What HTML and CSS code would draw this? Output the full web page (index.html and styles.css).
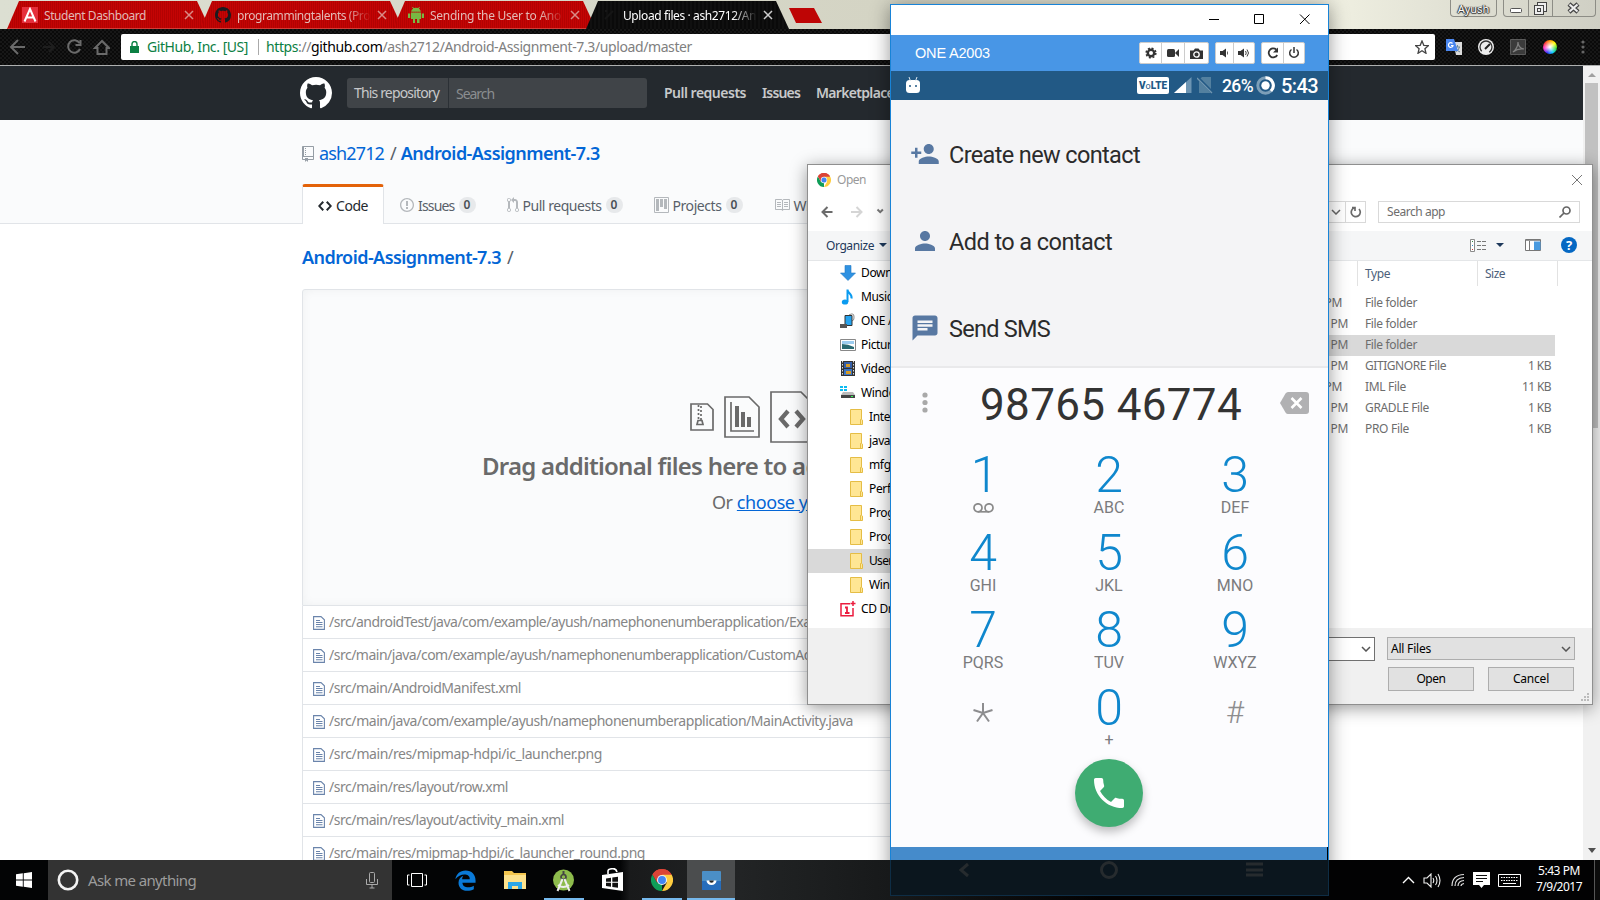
FILE: index.html
```html
<!DOCTYPE html>
<html lang="en">
<head>
<meta charset="utf-8">
<title>Upload files · ash2712/Android-Assignment-7.3</title>
<link rel="stylesheet" href="styles.css">
</head>
<body>
<svg class="defs" width="0" height="0">
  <defs>
    <symbol id="mark" viewBox="0 0 16 16"><path fill-rule="evenodd" d="M8 0C3.58 0 0 3.58 0 8c0 3.54 2.29 6.53 5.47 7.59.4.07.55-.17.55-.38 0-.19-.01-.82-.01-1.49-2.01.37-2.53-.49-2.69-.94-.09-.23-.48-.94-.82-1.13-.28-.15-.68-.52-.01-.53.63-.01 1.08.58 1.23.82.72 1.21 1.87.87 2.33.66.07-.52.28-.87.51-1.07-1.78-.2-3.64-.89-3.64-3.95 0-.87.31-1.59.82-2.15-.08-.2-.36-1.02.08-2.12 0 0 .67-.21 2.2.82.64-.18 1.32-.27 2-.27.68 0 1.36.09 2 .27 1.53-1.04 2.2-.82 2.2-.82.44 1.1.16 1.92.08 2.12.51.56.82 1.27.82 2.15 0 3.07-1.87 3.75-3.65 3.95.29.25.54.73.54 1.48 0 1.07-.01 1.93-.01 2.2 0 .21.15.46.55.38A8.01 8.01 0 0 0 16 8c0-4.42-3.58-8-8-8z"/></symbol>
    <symbol id="chrome" viewBox="0 0 48 48"><path fill="#db4437" d="M24 24 3.2 12A24 24 0 0 1 44.8 12z"/><path fill="#0f9d58" d="M24 24v24A24 24 0 0 1 3.2 12l10.4 18z"/><path fill="#ffcd40" d="M24 12h20.8A24 24 0 0 1 24 48l10.4-18z"/><path fill="#db4437" d="M3.2 12A24 24 0 0 1 44.8 12H24L13.6 30z"/><circle cx="24" cy="24" r="11" fill="#f1f1f1"/><circle cx="24" cy="24" r="8.6" fill="#4285f4"/></symbol>
    <symbol id="x" viewBox="0 0 10 10"><path d="M1 1l8 8M9 1L1 9" fill="none" stroke="currentColor" stroke-width="1.5"/></symbol>
    <symbol id="file" viewBox="0 0 12 14"><path d="M.6.6h7.4l3.4 3.2v9.6H.6zM3 4.5h4M3 6.5h6.5M3 8.5h6.5M3 10.7h6.5" fill="none" stroke="#6a84ab" stroke-width="1.1"/></symbol>
    <symbol id="folder" viewBox="0 0 13 16"><path d="M.5.5h11v10l1 .6v4.4H.5z" fill="#ffe694" stroke="#e5bd45"/><path d="M10.5 15v-4.500l1-1" fill="none" stroke="#e5bd45"/></symbol>
    <symbol id="chev" viewBox="0 0 10 6"><path d="M1 1l4 4 4-4" fill="none" stroke="currentColor" stroke-width="1.5"/></symbol>
  </defs>
</svg>

<main class="browser">
  <div class="strip">
    <div class="tab t-red"><svg width="16" height="16"><rect width="16" height="16" fill="#e5303c"/><path d="M2.500 14.500 8 2l5.500 12.500M4.500 10.500h7" fill="none" stroke="#fff" stroke-width="2"/></svg><span class="tt"><i data-w="102">Student Dashboard</i></span><svg class="tx" width="10" height="10"><use href="#x"/></svg></div>
    <div class="tab t-red"><svg width="16" height="16" fill="#1b1b1f"><use href="#mark"/></svg><span class="tt fade"><i data-w="133">programmingtalents (Pro</i></span><svg class="tx" width="10" height="10"><use href="#x"/></svg></div>
    <div class="tab t-red"><svg width="16" height="16" viewBox="0 0 16 16" fill="#78b843"><path d="M3 5.500h10V12H3zM4.500 12h2.500v4H5v-4zM9 12h2.500v4H9zM0 6.500h2.200V11H0zM13.800 6.500H16V11h-2.200zM3.200 4.800a4.800 4 0 0 1 9.600 0z"/><path d="M4.500 0l1.300 2M11.500 0l-1.300 2" stroke="#78b843"/></svg><span class="tt fade"><i data-w="131">Sending the User to Ano</i></span><svg class="tx" width="10" height="10"><use href="#x"/></svg></div>
    <div class="tab t-dark"><svg width="16" height="16"><path d="M4 12l8-8M4 4h2" stroke="#161616" stroke-width="2"/></svg><span class="tt fade"><i data-w="133">Upload files · ash2712/An</i></span><svg class="tx" width="10" height="10"><use href="#x"/></svg></div>
    <div class="newtab"></div>
    <div class="user">Ayush</div>
    <div class="wbtns">
      <svg width="24" height="17"><rect x="6.500" y="8.500" width="11" height="4" rx="1" fill="#fff" stroke="#555"/></svg>
      <svg width="24" height="17"><rect x="8.500" y="2.500" width="9" height="9" fill="#eee" stroke="#444"/><rect x="5.500" y="5.500" width="9" height="9" fill="#eee" stroke="#444"/><rect x="8.500" y="8.500" width="3" height="3" fill="none" stroke="#444"/></svg>
      <svg width="41" height="17"><path d="M16 4l9 8M25 4l-9 8" stroke="#444" stroke-width="4.500"/><path d="M16.500 4.500l8 7M24.500 4.500l-8 7" stroke="#eee" stroke-width="2.200"/></svg>
    </div>
  </div>
  <div class="toolbar">
    <svg width="110" height="36" fill="none" stroke="#6a6a6a" stroke-width="2"><path d="M25 18H12M18 11l-7 7 7 7"/><path d="M43 18h11M49 13l5 5-5 5" stroke="#1e1e1e"/><path d="M79.500 14A6.200 6.200 0 1 0 80 20M80.500 11v5h-5"/><path d="M95 19l7-7 7 7h-2.500v6h-9v-6z"/></svg>
    <div class="omni">
      <svg width="9" height="12"><path d="M0 5h9v7H0z" fill="#0b8043"/><path d="M2 5V3a2.500 2.500 0 0 1 5 0v2" fill="none" stroke="#0b8043" stroke-width="1.400"/></svg>
      <span class="ev" data-w="101">GitHub, Inc. [US]</span><span class="bar"></span>
      <span class="url" data-w="426"><b>https</b>://<em>github.com</em>/ash2712/Android-Assignment-7.3/upload/master</span>
      <svg class="star" width="14" height="14" viewBox="0 0 14 14"><path d="M7 1l1.800 4.300 4.600.4-3.500 3 1.100 4.600L7 10.800l-4 2.500 1.100-4.600-3.500-3 4.600-.4z" fill="none" stroke="#444" stroke-width="1.300"/></svg>
    </div>
    <div class="exts">
      <svg width="16" height="16"><path d="M7 3h9v13H10z" fill="#dcdcdc"/><path d="M9 8h5M11.500 6v2M13.500 8q-1 4-4 5M10 9q1 3 4 4" stroke="#6d8a99" fill="none"/><path d="M0 0h8l4 12H0z" fill="#4a86ee"/><path d="M6.500 4.500a2.300 2.300 0 1 0 .5 2H5" fill="none" stroke="#fff" stroke-width="1.200"/></svg>
      <svg width="16" height="16"><circle cx="8" cy="8" r="8" fill="#eee"/><circle cx="8" cy="8" r="6" fill="none" stroke="#333" stroke-width="1.300" stroke-dasharray="29 9" transform="rotate(135 8 8)"/><path d="M7 10l5-5" stroke="#222" stroke-width="2"/></svg>
      <svg width="16" height="16"><path d="M.5.5h15v15H.5z" fill="#3b3b3b" stroke="#5a5a5a"/><path d="M3 13Q8 9 8 3q0 6 6 7Q8 9 3 13" fill="none" stroke="#808080" stroke-width="1.200"/></svg>
      <span class="wheel"></span>
      <svg class="dots" width="4" height="14" fill="#666"><circle cx="2" cy="2" r="1.600"/><circle cx="2" cy="7" r="1.600"/><circle cx="2" cy="12" r="1.600"/></svg>
    </div>
  </div>

  <div class="view">
    <div class="page">
      <header class="gh">
        <svg width="32" height="32" fill="#fff"><use href="#mark"/></svg>
        <div class="search"><span class="scope"><i data-w="85">This repository</i></span><span class="ph"><i data-w="38">Search</i></span></div>
        <nav><a data-w="82">Pull requests</a><a data-w="38">Issues</a><a data-w="78">Marketplace</a></nav>
      </header>
      <section class="head">
        <h1><svg width="12" height="16" viewBox="0 0 12 16" fill="#959da5"><path fill-rule="evenodd" d="M4 9H3V8h1v1zm0-3H3v1h1V6zm0-2H3v1h1V4zm0-2H3v1h1V2zm8-1v12c0 .55-.45 1-1 1H6v2l-1.500-1.500L3 16v-2H1c-.55 0-1-.45-1-1V1c0-.55.45-1 1-1h10c.55 0 1 .45 1 1zm-1 10H1v2h2v-1h3v1h5v-2zm0-10H2v9h9V1z"/></svg><a data-w="65">ash2712</a><span>/</span><a class="b" data-w="199">Android-Assignment-7.3</a></h1>
        <nav class="rnav">
          <a class="on"><svg width="14" height="16" viewBox="0 0 14 16" fill="#24292e"><path d="M9.500 3L8 4.500 11.500 8 8 11.500 9.500 13 14 8 9.500 3zm-5 0L0 8l4.500 5L6 11.500 2.500 8 6 4.500 4.500 3z"/></svg><span data-w="32">Code</span></a>
          <a class="n1"><svg width="14" height="16" viewBox="0 0 14 16" fill="#b4b8bc"><path fill-rule="evenodd" d="M7 2.300c3.140 0 5.700 2.560 5.700 5.700s-2.560 5.700-5.700 5.700A5.710 5.710 0 0 1 1.300 8c0-3.140 2.560-5.700 5.700-5.700zM7 1C3.140 1 0 4.140 0 8s3.140 7 7 7 7-3.140 7-7-3.140-7-7-7zm1 3H6v5h2V4zm0 6H6v2h2v-2z"/></svg><span data-w="36.500">Issues</span><b>0</b></a>
          <a class="n2"><svg width="12" height="16" viewBox="0 0 12 16" fill="#b4b8bc"><path fill-rule="evenodd" d="M11 11.280V5c-.03-.78-.34-1.470-.94-2.060C9.460 2.350 8.780 2.030 8 2H7V0L4 3l3 3V4h1c.27.020.48.110.69.310.21.200.3.420.31.690v6.280A1.993 1.993 0 0 0 10 15a1.993 1.993 0 0 0 1-3.720zm-1 2.920c-.66 0-1.200-.55-1.200-1.200 0-.65.55-1.200 1.200-1.200.65 0 1.200.55 1.200 1.200 0 .65-.55 1.200-1.200 1.200zM4 3c0-1.110-.89-2-2-2a1.993 1.993 0 0 0-1 3.720v6.560A1.993 1.993 0 0 0 2 15a1.993 1.993 0 0 0 1-3.720V4.720c.59-.34 1-.98 1-1.720zm-.8 10c0 .66-.55 1.200-1.200 1.200-.65 0-1.200-.55-1.200-1.200 0-.65.55-1.200 1.200-1.200.65 0 1.200.55 1.200 1.200zM2 4.200C1.340 4.200.8 3.650.8 3c0-.65.55-1.200 1.200-1.200.65 0 1.200.55 1.200 1.200 0 .65-.55 1.200-1.200 1.200z"/></svg><span data-w="79">Pull requests</span><b>0</b></a>
          <a class="n3"><svg width="15" height="16" viewBox="0 0 15 16" fill="#b4b8bc"><path fill-rule="evenodd" d="M10 12h3V2h-3v10zm-4-2h3V2H6v8zm-4 4h3V2H2v12zm-1 1h13V1H1v14zM14 0H1a1 1 0 0 0-1 1v14a1 1 0 0 0 1 1h13a1 1 0 0 0 1-1V1a1 1 0 0 0-1-1z"/></svg><span data-w="49">Projects</span><b>0</b></a>
          <a class="n4"><svg width="16" height="16" viewBox="0 0 16 16" fill="#b4b8bc"><path fill-rule="evenodd" d="M3 5h4v1H3V5zm0 3h4V7H3v1zm0 2h4V9H3v1zm11-5h-4v1h4V5zm0 2h-4v1h4V7zm0 2h-4v1h4V9zm2-6v9c0 .55-.45 1-1 1H9.500l-1 1-1-1H2c-.55 0-1-.45-1-1V3c0-.55.45-1 1-1h5.500l1 1 1-1H15c.55 0 1 .45 1 1zm-8 .5L7.500 3H2v9h6V3.500zm7-.5H9.500l-.5.5V12h6V3z"/></svg><span data-w="26">Wiki</span></a>
        </nav>
      </section>
      <section class="body">
        <div class="crumb"><a data-w="199">Android-Assignment-7.3</a><span>/</span></div>
        <div class="drop">
          <div class="pics">
            <svg width="24" height="28" fill="none" stroke="#6a6a6a" stroke-width="1.700"><path d="M1 1h16.500L23 6.500V27H1z"/><path d="M8.500 2v14M11 3v14" stroke-dasharray="2 2"/><path d="M7 21.500h6l-1-4H8z"/></svg>
            <svg width="36" height="42" fill="none" stroke="#6a6a6a" stroke-width="1.700"><path d="M1 1h24l10 10v30H1z"/><path d="M7 6v29h23"/><path d="M13 10v21M19 16v15M25 21v10" stroke-width="4"/></svg>
            <svg width="44" height="52" fill="none" stroke="#6a6a6a" stroke-width="1.700"><path d="M1 1h30l12 12v38H1z"/><path d="M18 20l-7 8 7 8M26 20l7 8-7 8" stroke-width="4.200"/></svg>
            <svg width="36" height="42" fill="none" stroke="#6a6a6a" stroke-width="1.700"><path d="M1 1h24l10 10v30H1z"/></svg>
            <svg width="24" height="28" fill="none" stroke="#6a6a6a" stroke-width="1.700"><path d="M1 1h16.500L23 6.500V27H1z"/></svg>
          </div>
          <h2><span data-w="620">Drag additional files here to add them to your repository</span></h2>
          <p><span data-w="160">Or <u>choose your files</u></span></p>
        </div>
        <ul class="files">
          <li><svg width="12" height="14"><use href="#file"/></svg><span data-w="562">/src/androidTest/java/com/example/ayush/namephonenumberapplication/ExampleInstrum</span></li>
          <li><svg width="12" height="14"><use href="#file"/></svg><span data-w="541">/src/main/java/com/example/ayush/namephonenumberapplication/CustomAdapter.java</span></li>
          <li><svg width="12" height="14"><use href="#file"/></svg><span data-w="192">/src/main/AndroidManifest.xml</span></li>
          <li><svg width="12" height="14"><use href="#file"/></svg><span data-w="524">/src/main/java/com/example/ayush/namephonenumberapplication/MainActivity.java</span></li>
          <li><svg width="12" height="14"><use href="#file"/></svg><span data-w="273">/src/main/res/mipmap-hdpi/ic_launcher.png</span></li>
          <li><svg width="12" height="14"><use href="#file"/></svg><span data-w="179">/src/main/res/layout/row.xml</span></li>
          <li><svg width="12" height="14"><use href="#file"/></svg><span data-w="235">/src/main/res/layout/activity_main.xml</span></li>
          <li><svg width="12" height="14"><use href="#file"/></svg><span data-w="316">/src/main/res/mipmap-hdpi/ic_launcher_round.png</span></li>
        </ul>
      </section>
    </div>
    <div class="sbar"><span class="up"></span><span class="thumb"></span><span class="down"></span></div>
  </div>
</main>

<section class="dialog">
  <div class="dtitle"><svg width="14" height="14"><use href="#chrome"/></svg><span data-w="29">Open</span><svg class="dx" width="12" height="12"><path d="M1 1l10 10M11 1L1 11" stroke="#777"/></svg></div>
  <div class="dnav">
    <svg width="70" height="16" fill="none" stroke-width="2"><path d="M13.500 8H3M8.500 3l-5 5 5 5" stroke="#6b6b6b"/><path d="M32 8h10M37.500 3l5 5-5 5" stroke="#d5d5d5"/><path d="M58.500 5.500l2.700 2.700 2.700-2.700" stroke="#777"/></svg>
    <div class="addr"><svg width="10" height="6"><use href="#chev"/></svg><i><svg width="12" height="12"><path d="M4 2a4.500 4.500 0 1 0 5 1M2 1.500h3V5" fill="none" stroke="#6a6a6a" stroke-width="1.700"/></svg></i></div>
    <div class="dsearch"><span data-w="58">Search app</span><svg width="12" height="12" fill="none" stroke="#666" stroke-width="1.700"><circle cx="7.500" cy="4.500" r="3.500"/><path d="M5 7l-4.500 4.500"/></svg></div>
  </div>
  <div class="dtools"><span data-w="48">Organize</span><i class="car"></i>
    <svg class="v1" width="16" height="13"><path d="M.5.5h4v12h-4z" fill="#fff" stroke="#8b8b8b"/><path d="M7 2.500h4M12 2.500h4M7 6.500h4M12 6.500h4M7 10.500h4M12 10.500h4" stroke="#777"/><path d="M2 6h1v1H2z" fill="#38c"/><path d="M2 10h1v1H2z" fill="#c33"/><path d="M2 2h1v1H2z" fill="#384"/></svg><i class="car c2"></i>
    <svg class="v2" width="16" height="12"><path d="M.5.5h15v11H.5zM4.500 2v10" fill="#fff" stroke="#777"/><path d="M1 1.500h14" stroke="#999"/><path d="M9 2.500h6.500V11H9z" fill="#4a9be0"/></svg>
    <span class="help">?</span>
  </div>
  <div class="dbody">
    <ul class="tree">
      <li><svg width="16" height="16"><path d="M5 .5h6V8h4.500L8 15.500.5 8H5z" fill="#2f92e2" stroke="#2479c4" stroke-width=".6"/></svg>Downloads</li>
      <li><svg width="16" height="16"><ellipse cx="5" cy="13" rx="3.200" ry="2.600" fill="#0a9bf0"/><path d="M7.500 13V.5c0 4 5 4 4 9" fill="none" stroke="#0a9bf0" stroke-width="2"/></svg>Music</li>
      <li><svg width="16" height="16"><path d="M9 2q5-3 5 2t-3 3" fill="none" stroke="#888"/><path d="M5 2.500h7v10H5z" fill="#26a3ee" stroke="#333"/><path d="M0 11h7v4H0z" fill="#555"/></svg>ONE A2003</li>
      <li><svg width="16" height="16"><path d="M.5 2.500h15v11H.5z" fill="#fff" stroke="#888"/><path d="M2 4h12v3H2z" fill="#9ccdf0"/><path d="M2 7q6 0 12 3v2H2z" fill="#286a72"/></svg>Pictures</li>
      <li><svg width="16" height="16"><path d="M1 0h14v15H1z" fill="#333"/><path d="M4 1h8v6H4z" fill="#355fa8"/><path d="M4 8h8v6H4z" fill="#3a74c4"/><path d="M6 3h4v3H6zM6 10h5v3H6z" fill="#d69b25"/><path d="M2.500 0v15M13.500 0v15" stroke="#ddd" stroke-dasharray="1.500 1.500"/></svg>Videos</li>
      <li><svg width="16" height="16"><path d="M0 1h3v2H0zM4 1h3v2H4zM0 4h3v2H0zM4 4h3v2H4z" fill="#0cbcf2"/><path d="M3 7h10l2 3H1z" fill="#bbb"/><path d="M1 10h14v3H1z" fill="#444"/><path d="M11 11h2v1h-2z" fill="#3f5"/></svg>Windows (C:)</li>
      <li class="f"><svg width="13" height="16"><use href="#folder"/></svg>Intel</li>
      <li class="f"><svg width="13" height="16"><use href="#folder"/></svg>java</li>
      <li class="f"><svg width="13" height="16"><use href="#folder"/></svg>mfg</li>
      <li class="f"><svg width="13" height="16"><use href="#folder"/></svg>PerfLogs</li>
      <li class="f"><svg width="13" height="16"><use href="#folder"/></svg>Program Files</li>
      <li class="f"><svg width="13" height="16"><use href="#folder"/></svg>Program Files</li>
      <li class="f sel tight"><svg width="13" height="16"><use href="#folder"/></svg>Users</li>
      <li class="f"><svg width="13" height="16"><use href="#folder"/></svg>Windows</li>
      <li><svg width="16" height="16" fill="none" stroke="#eb1d3f" stroke-width="1.500"><path d="M10 2.800H1v12h12V7M13 0v5M10.500 2.500h5"/><path d="M5 6.500h2V12M5 12h4.500" stroke-width="1.800"/></svg>CD Drive</li>
    </ul>
    <div class="grid">
      <div class="gr gh-row"><span></span><span><i data-w="25">Type</i></span><span><i data-w="20">Size</i></span></div>
      <div class="gr"><span class="d d2">PM</span><span><i data-w="52">File folder</i></span><span></span></div>
      <div class="gr"><span class="d">PM</span><span><i data-w="52">File folder</i></span><span></span></div>
      <div class="gr sel"><span class="d">PM</span><span><i data-w="52">File folder</i></span><span></span></div>
      <div class="gr"><span class="d">PM</span><span><i data-w="81">GITIGNORE File</i></span><span class="sz"><i data-w="23">1 KB</i></span></div>
      <div class="gr"><span class="d d2">PM</span><span><i data-w="41">IML File</i></span><span class="sz"><i data-w="29">11 KB</i></span></div>
      <div class="gr"><span class="d">PM</span><span><i data-w="64">GRADLE File</i></span><span class="sz"><i data-w="23">1 KB</i></span></div>
      <div class="gr"><span class="d">PM</span><span><i data-w="44">PRO File</i></span><span class="sz"><i data-w="23">1 KB</i></span></div>
    </div>
  </div>
  <div class="dfoot">
    <div class="frow"><div class="fname"><svg width="10" height="6"><use href="#chev"/></svg></div><div class="ftype"><span data-w="40">All Files</span><svg width="10" height="6"><use href="#chev"/></svg></div></div>
    <div class="frow f2"><button><span data-w="29">Open</span></button><button><span data-w="36">Cancel</span></button></div>
    <svg class="grip" width="9" height="9" fill="#bbb"><path d="M6 0h2v2H6zM3 3h2v2H3zM6 3h2v2H6zM0 6h2v2H0zM3 6h2v2H3zM6 6h2v2H6z"/></svg>
  </div>
</section>

<section class="phone">
  <div class="ptitle"><svg width="104" height="12" fill="none" stroke="#000"><path d="M0 6.500h10M45.500 1.500h9v9h-9z"/><path d="M91 1.500l9.500 9.500M100.500 1.500L91 11"/></svg></div>
  <div class="pbar"><span data-w="75">ONE A2003</span>
    <div class="bg">
      <i class="w22"><svg width="12" height="12"><circle cx="6" cy="6" r="3.200" fill="none" stroke="#333" stroke-width="2.400"/><circle cx="6" cy="6" r="4.800" fill="none" stroke="#333" stroke-width="1.600" stroke-dasharray="2 1.770"/></svg></i>
      <i class="w23"><svg width="12" height="10" fill="#333"><rect y="1" width="8" height="8" rx="1.500"/><path d="M8 5l4-4v8z"/></svg></i>
      <i class="w24"><svg width="13" height="11"><path d="M0 2.500h3.500L5 .5h3.500l1.500 2h3V11H0z" fill="#333"/><circle cx="6.500" cy="6.500" r="2.700" fill="none" stroke="#fff" stroke-width="1.300"/></svg></i>
    </div>
    <div class="bg">
      <i class="w18"><svg width="9" height="10"><path d="M0 3h2.500L6 .5v9L2.500 7H0z" fill="#333"/><path d="M7.500 3.500v3" stroke="#666"/></svg></i>
      <i class="w22"><svg width="12" height="10"><path d="M0 3h2.500L6 .5v9L2.500 7H0z" fill="#333"/><path d="M7.500 3q1.500 2 0 4M9 1.500q3 3.500 0 7" fill="none" stroke="#444"/></svg></i>
    </div>
    <div class="bg">
      <i class="w21"><svg width="12" height="12"><path d="M9.200 2.500A4.500 4.500 0 1 0 10.200 8" fill="none" stroke="#333" stroke-width="1.800"/><path d="M11 .5v5H6z" fill="#333"/></svg></i>
      <i class="w21"><svg width="12" height="12" fill="none" stroke="#333" stroke-width="1.500"><path d="M3.500 2.500a4.300 4.300 0 1 0 5 0M6 0v6"/></svg></i>
    </div>
  </div>
  <div class="pstat">
    <svg width="14" height="17"><rect y="3" width="14" height="13" rx="3.500" fill="#fff"/><path d="M3 0l1.500 4M11 0L9.500 4" stroke="#dfe8ef"/><circle cx="4" cy="9" r="1" fill="#225985"/><circle cx="10" cy="9" r="1" fill="#225985"/></svg>
    <span class="volte">V<small>o</small>LTE</span>
    <svg class="sg" width="18" height="17"><path d="M17.500 0v16H0z" fill="#6c94b2"/><path d="M12 5v11H0z" fill="#fff"/></svg>
    <svg class="sm" width="17" height="17"><path d="M5 0h9v16H2V3z" fill="#53809f"/><path d="M0 0l16 16" stroke="#225985" stroke-width="3"/><path d="M0 1l15 15" stroke="#7095b0" stroke-width="1.300"/></svg>
    <span class="pct" data-w="31">26%</span>
    <svg class="bt" width="19" height="19" fill="none"><circle cx="9.500" cy="9.500" r="7.700" stroke="#7d9fb8" stroke-width="3"/><path d="M9.500 1.800A7.700 7.700 0 0 1 15 15" stroke="#fff" stroke-width="3"/><circle cx="9.500" cy="9.500" r="4.200" fill="#fff"/></svg>
    <span class="clk" data-w="37">5:43</span>
  </div>
  <div class="acts">
    <div><svg width="30" height="30" viewBox="0 0 24 24" fill="#5878a2"><path d="M15 12c2.210 0 4-1.790 4-4s-1.790-4-4-4-4 1.790-4 4 1.790 4 4 4zm-9-2V7H4v3H1v2h3v3h2v-3h3v-2H6zm9 4c-2.670 0-8 1.340-8 4v2h16v-2c0-2.660-5.330-4-8-4z"/></svg><span data-w="191">Create new contact</span></div>
    <div><svg width="30" height="30" viewBox="0 0 24 24" fill="#5878a2"><path d="M12 12c2.210 0 4-1.790 4-4s-1.790-4-4-4-4 1.790-4 4 1.790 4 4 4zm0 2c-2.670 0-8 1.340-8 4v2h16v-2c0-2.660-5.330-4-8-4z"/></svg><span data-w="163">Add to a contact</span></div>
    <div><svg width="30" height="30" viewBox="0 0 24 24" fill="#5878a2"><path d="M20 2H4c-1.100 0-1.990.9-1.990 2L2 22l4-4h14c1.100 0 2-.9 2-2V4c0-1.100-.9-2-2-2zM6 9h12v2H6V9zm8 5H6v-2h8v2zm4-6H6V6h12v2z"/></svg><span data-w="101">Send SMS</span></div>
  </div>
  <div class="num"><svg width="6" height="22" fill="#a9a9a9"><circle cx="3" cy="3" r="2.600"/><circle cx="3" cy="10.500" r="2.600"/><circle cx="3" cy="18" r="2.600"/></svg><span data-w="262">98765 46774</span><svg width="29" height="22"><path d="M8 0h18q3 0 3 3v16q0 3-3 3H8q-1.500 0-2.500-1.500L0 11l5.500-9.500Q6.500 0 8 0z" fill="#b1b1b3"/><path d="M11.500 6l10 10M21.500 6l-10 10" stroke="#fff" stroke-width="2.600"/></svg></div>
  <div class="keys">
    <div><b class="one">1</b><svg width="21" height="10" fill="none" stroke="#8a8a8a" stroke-width="1.700"><circle cx="5" cy="4.800" r="4"/><circle cx="16" cy="4.800" r="4"/><path d="M5 8.800h11"/></svg></div><div><b>2</b><i>ABC</i></div><div><b>3</b><i>DEF</i></div>
    <div><b>4</b><i>GHI</i></div><div><b>5</b><i>JKL</i></div><div><b>6</b><i>MNO</i></div>
    <div><b>7</b><i>PQRS</i></div><div><b>8</b><i>TUV</i></div><div><b>9</b><i>WXYZ</i></div>
    <div><svg class="ast" width="22" height="22" fill="none" stroke="#8d8d8f" stroke-width="2"><path d="M11 11V1M11 11l9.500-3M11 11l6 8.500M11 11l-6 8.500M11 11L1.500 8"/></svg></div><div><b>0</b><i class="plus">+</i></div><div><em>#</em></div>
  </div>
  <div class="call"><span><svg width="40" height="40" viewBox="0 0 24 24" fill="#fff"><path d="M6.620 10.790c1.440 2.830 3.760 5.140 6.590 6.590l2.200-2.200c.27-.27.67-.36 1.020-.24 1.120.37 2.330.57 3.570.57.55 0 1 .45 1 1V20c0 .55-.45 1-1 1-9.390 0-17-7.610-17-17 0-.55.45-1 1-1h3.500c.55 0 1 .45 1 1 0 1.250.2 2.450.57 3.570.11.350.03.740-.25 1.020l-2.200 2.200z"/></svg></span></div>
  <div class="pnav"></div>
</section>

<footer class="task">
  <div class="start"><svg width="16" height="16" fill="#fff"><path d="M0 2.300l6.800-1v6.300H0zM7.700 1.200L16 0v7.600H7.700zM0 8.400h6.800v6.300L0 13.700zM7.700 8.400H16V16l-8.300-1.200z"/></svg></div>
  <div class="ask"><svg width="22" height="22"><circle cx="11" cy="11" r="9.200" fill="none" stroke="#f2f2f2" stroke-width="2.600"/></svg><span data-w="108">Ask me anything</span><svg class="mic" width="12" height="17" fill="none" stroke="#aaa"><rect x="3.500" y=".5" width="5" height="10" rx="1"/><path d="M.5 7v5.500h11V7M6 12.500v3.500M3.500 16h5"/></svg></div>
  <div class="apps">
    <div><svg width="20" height="16" fill="none" stroke="#fff"><path d="M4.500 1.500h11v13h-11zM2.500 3H.5v10h2M17.500 3h2v10h-2"/></svg></div>
    <div class="edge"><svg width="21" height="21" viewBox="0 0 24 24" fill="#0a7ad8"><path d="M.5 10.700C1 5 5.500.5 12.200.5 19 .5 23.500 5 23.500 12v2.500H8.500c.2 6 8 6.500 13 3.500v4c-7.500 4-17.500 1.500-17.500-7.500 0-4 2.500-6.800 5.500-8-1 1.500-1.200 2.500-1.300 4h8.600c.5-7-11.500-7-16.300.2z"/></svg></div>
    <div><svg width="22" height="20"><path d="M0 1h8l2 2h12v16H0z" fill="#f4c64e"/><path d="M0 5h22v14H0z" fill="#fde28c"/><path d="M4 12h14v7h-4v-3H8v3H4z" fill="#2ba7e8"/></svg></div>
    <div class="ul"><svg width="21" height="23"><circle cx="10.500" cy="11" r="10.500" fill="#8dbb4c"/><path d="M10.500 2v4" stroke="#444" stroke-width="2"/><circle cx="10.500" cy="8" r="2.500" fill="none" stroke="#444" stroke-width="1.700"/><path d="M9.500 10L4.500 22M11.500 10l5 12M5 16q5 4 11 0" fill="none" stroke="#eee" stroke-width="2"/></svg></div>
    <div><svg width="22" height="24"><path d="M0 7l21-3v19l-21-3z" fill="#fff"/><path d="M6 6V3q0-2 4-2.300Q14 0 15 4" fill="none" stroke="#fff" stroke-width="1.600"/><path d="M4 10.500l5-.7v4H4zM10.300 9.600l5.700-.8v5h-5.700zM4 14.800h5v4l-5-.7zM10.300 14.800H16v5l-5.700-.8z" fill="#111"/></svg></div>
    <div class="ul"><svg width="22" height="22"><use href="#chrome"/></svg></div>
    <div class="ul full"><svg width="19" height="19"><rect width="19" height="19" rx="1" fill="#4b8fc6"/><rect y="10" width="19" height="9" fill="#276dbb"/><path d="M4.500 9.500h10a5 4.500 0 0 1-10 0z" fill="#fff"/><path d="M7.200 9.500h4.600a2.300 2.300 0 0 1-4.600 0z" fill="#222"/></svg></div>
  </div>
  <div class="under">
    <svg width="438" height="36" fill="none" stroke="#262b2e" stroke-width="3"><path d="M77 4l-7 6 7 6"/><circle cx="218" cy="10" r="7.500"/><path d="M355 4h17M355 10h17M355 15h17"/></svg>
  </div>
  <div class="tray">
    <svg class="up2" width="13" height="8"><path d="M1 7l5.500-5.500L12 7" fill="none" stroke="#fff" stroke-width="1.400"/></svg>
    <svg width="18" height="15" fill="none" stroke="#eee" stroke-width="1.100"><path d="M1 5h3l4-4v13L4 10H1zM10 5q1.500 2.500 0 5M12.500 3q3 4.500 0 9M15 1q4 6.500 0 13"/></svg>
    <svg class="wf" width="14" height="14" fill="none" stroke="#ddd" stroke-width="1.200"><path d="M1 13Q1 2 13 1.500M4 13q0-8 9-8.500M7 13q0-5 6-5.500M10 13q0-2 3-2.500"/></svg>
    <svg class="ac" width="17" height="16"><path d="M0 0h17v13h-6l-2.500 3L6 13H0z" fill="#fff"/><path d="M3 3.500h11M3 6.500h11M3 9.500h7" stroke="#111"/></svg>
    <svg class="kb" width="23" height="13"><path d="M.5.500h22v12H.5z" fill="none" stroke="#fff"/><path d="M3 3.500h17M3 6.500h17" stroke="#fff" stroke-dasharray="1.500 1"/><path d="M5 9.500h13" stroke="#fff"/></svg>
    <div class="time"><span data-w="42">5:43 PM</span><span data-w="46">7/9/2017</span></div>
  </div>
</footer>
<script src="fit.js"></script>
</body>
</html>
```
FILE: styles.css
```css
* { box-sizing: border-box; margin: 0; padding: 0; }
body { width: 1600px; height: 900px; overflow: hidden; position: relative; background: #fff; font-family: "Noto Sans", "Open Sans", sans-serif; font-size: 12px; }
svg { flex: none; display: block; }
i, em { font-style: normal; }
ul { list-style: none; }
span, i, a { white-space: nowrap; }
[data-w] { display: inline-block; }
.defs { position: absolute; }

/* Browser window */
.browser { position: absolute; left: 0; top: 0; width: 1600px; height: 860px; display: flex; flex-direction: column; }
.strip { height: 29px; flex: none; display: flex; align-items: flex-start; padding: 1px 4px 0 7px; background: linear-gradient(90deg, #dcdfd2, #d4d4c4 55%, #eeeee0 84%, #cfcfc4); }
.tab { width: 203px; height: 28px; margin-right: -10px; flex: none; display: flex; align-items: center; padding: 0 0 0 15px; color: #e3b9b5; clip-path: polygon(12px 0, 190px 0, 203px 100%, 0 100%); }
.t-red { background: repeating-linear-gradient(90deg, #c40404 0 1px, #b30202 1px 2px); box-shadow: inset 0 -1px #d53b36; }
.t-dark { background: repeating-linear-gradient(90deg, #101010 0 2px, #0a0a0a 2px 4px); color: #fff; }
.tt { width: 134px; margin-left: 6px; overflow: hidden; flex: none; }
.tt.fade { mask-image: linear-gradient(90deg, #000 82%, transparent); }
.tx { margin-left: 6px; color: #d98b86; }
.t-dark .tx { color: #ccc; }
.newtab { width: 33px; height: 15px; margin: 7px 0 0 10px; background: #be0505; clip-path: polygon(0 0, 25px 0, 100% 100%, 7px 100%); }
.user { margin: -1px 6px 0 auto; width: 47px; height: 17px; border: 1px solid #8d8d86; border-top: 0; border-radius: 0 0 4px 4px; text-align: center; line-height: 17px; font-size: 11px; color: #fff; text-shadow: 0 0 1px #222, 1px 0 1px #333, -1px 0 1px #333, 0 1px 1px #333; }
.wbtns { display: flex; margin-top: -1px; height: 17px; width: 93px; border: 1px solid #8d8d86; border-top: 0; border-radius: 0 0 4px 4px; }
.wbtns svg + svg { border-left: 1px solid #8d8d86; }
.wbtns svg { flex: 0 1 auto; }
.toolbar { height: 37px; flex: none; display: flex; align-items: flex-start; background: repeating-conic-gradient(#0a0a0a 0 25%, #171717 0 50%) 0 0 / 4px 4px; border-bottom: 1px solid #aeb0b0; }
.omni { width: 1314px; height: 26px; margin: 5px 0 0 11px; background: #fff; border-radius: 2px; display: flex; align-items: center; padding: 0 6px 0 9px; font-size: 14px; }
.omni span { margin-top: -1px; }
.ev { color: #0b8043; margin-left: 8px; }
.omni .bar { width: 1px; height: 16px; background: #aaa; margin: 0 7px 0 10px; }
.url { color: #808080; }
.url b { font-weight: 400; color: #0b8043; }
.url em { color: #000; }
.star { margin-left: auto; }
.exts { display: flex; align-items: center; height: 36px; padding-left: 11px; gap: 16px; }
.wheel { width: 14px; height: 14px; border-radius: 50%; background: radial-gradient(#fff 5%, transparent 65%), conic-gradient(#f90, #ff0, #3d3, #0cf, #33f, #f3c, #f33, #f90); margin-left: 1px; }
.dots { margin-left: 8px; }
.view { flex: 1; display: flex; min-height: 0; }
.page { width: 1583px; overflow: hidden; }
.gh { height: 54px; background: #24292e; display: flex; align-items: center; padding-left: 300px; font-size: 14px; }
.search { width: 300px; height: 30px; margin-left: 15px; background: #404448; border-radius: 3px; display: flex; align-items: center; }
.scope { width: 102px; height: 30px; line-height: 29px; padding-left: 7px; border-right: 1px solid #2b3035; color: #c8c9cb; }
.ph { padding-left: 7px; color: #8b8e90; }
.gh nav { display: flex; gap: 16px; margin: -1px 0 0 17px; font-weight: 600; color: #c8c9cb; }
.head { height: 104px; background: #fafbfc; border-bottom: 1px solid #e1e4e8; padding: 19px 0 0 302px; color: #586069; }
h1 { font-size: 18px; font-weight: 400; display: flex; align-items: center; height: 28px; }
h1 svg { margin-top: 1px; }
h1 a { color: #0366d6; margin-left: 5px; }
h1 span { margin: 0 4px 0 6px; }
h1 a.b { font-weight: 600; margin-left: 0; }
.rnav { display: flex; margin-top: 17px; height: 40px; font-size: 14px; }
.rnav a { display: flex; align-items: center; padding-top: 2px; }
.rnav a svg { margin-right: 4px; }
.rnav b { width: 17px; height: 16px; border-radius: 8px; background: #e7e9eb; text-align: center; font-size: 12px; line-height: 16px; font-weight: 600; margin-left: 4px; color: #4a5057; }
.rnav .on { width: 82px; border: 1px solid #e1e4e8; border-top: 3px solid #e36209; border-bottom: 0; border-radius: 3px 3px 0 0; background: #fff; padding: 0 0 0 15px; color: #24292e; }
.n1 { margin-left: 16px; }
.n2 { margin-left: 31px; }
.n3 { margin-left: 31px; }
.n4 { margin-left: 31px; }
.body { padding: 19px 0 0 302px; }
.crumb { font-size: 18px; line-height: 28px; height: 46px; color: #586069; }
.crumb a { font-weight: 600; color: #0366d6; margin-right: 6px; }
.drop { width: 980px; height: 317px; border: 1px solid #e1e4e8; border-radius: 3px 3px 0 0; background: #fafbfc; box-shadow: inset 0 0 10px rgba(27,31,35,.05); text-align: center; color: #6a6a6a; padding-top: 101px; }
.pics { display: flex; justify-content: center; align-items: center; gap: 10px; }
h2 { font-size: 24px; font-weight: 600; line-height: 30px; margin-top: 8px; }
.drop p { font-size: 18px; line-height: 26px; margin-top: 8px; }
.drop u { color: #0366d6; }
.files { width: 980px; border-left: 1px solid #e1e4e8; font-size: 14px; color: #868686; }
.files li { height: 33px; display: flex; align-items: center; padding-left: 10px; gap: 4px; border-bottom: 1px solid #e1e4e8; }
.files span { margin-top: -1px; }
.files svg { margin-top: 1px; }
.sbar { width: 17px; background: #f1f1f1; display: flex; flex-direction: column; align-items: center; }
.up { border: 4px solid transparent; border-top: 0; border-bottom-color: #a0a0a0; margin: 7px 0 6px; }
.thumb { width: 13px; height: 345px; background: #c1c1c1; }
.down { border: 4px solid transparent; border-bottom: 0; border-top: 5px solid #505050; margin: auto 0 7px; }

/* File chooser */
.dialog { position: absolute; left: 807px; top: 164px; width: 786px; height: 541px; background: #fff; border: 1px solid #8f8f8f; box-shadow: 0 3px 16px rgba(0,0,0,.4); color: #000; display: flex; flex-direction: column; }
.dtitle { height: 30px; display: flex; align-items: center; padding: 0 9px 1px; color: #999; gap: 6px; flex: none; }
.dx { margin-left: auto; }
.dnav { height: 36px; display: flex; align-items: center; padding: 0 12px 2px 11px; flex: none; }
.addr { margin-left: auto; width: 400px; height: 22px; border: 1px solid #d9d9d9; display: flex; justify-content: flex-end; align-items: center; color: #666; margin-right: 12px; gap: 4px; }
.addr i { width: 20px; height: 20px; border-left: 1px solid #d9d9d9; display: grid; place-items: center; }
.dsearch { width: 202px; height: 22px; border: 1px solid #d9d9d9; display: flex; align-items: center; justify-content: space-between; padding: 0 8px; color: #6d6d6d; }
.dsearch span { margin-top: -1px; }
.dtools { height: 30px; background: #f5f6f7; border-bottom: 1px solid #e4e6e8; display: flex; align-items: center; padding: 0 15px 1px 18px; color: #1e395b; flex: none; }
.car { border: 4px solid transparent; border-top-color: #1e395b; border-bottom: 0; margin-left: 5px; }
.v1 { margin-left: auto; }
.c2 { margin: 0 21px 0 10px; }
.help { width: 16px; height: 16px; border-radius: 50%; background: #0568c3; color: #fff; text-align: center; line-height: 16px; font-size: 13px; font-weight: 700; margin-left: 20px; }
.dbody { height: 367px; display: flex; overflow: hidden; flex: none; }
.tree { width: 300px; letter-spacing: -.35px; }
.tree li { height: 24px; display: flex; align-items: center; padding: 0 0 2px 32px; gap: 5px; }
.tree .f { padding-left: 42px; gap: 6px; }
.tree .tight { letter-spacing: -.65px; }
.tree svg { margin-top: 1px; }
.sel { background: #d9d9d9; }
.grid { width: 454px; margin-left: auto; margin-right: 37px; color: #6d6d6d; }
.gr { height: 21px; display: grid; grid-template-columns: 257px 120px 77px; align-items: center; }
.gr > span { padding: 0 0 2px 7px; }
.gr.gh-row { height: 25px; margin-bottom: 7px; grid-template-columns: 257px 120px 80px; color: #4c607a; width: 457px; }
.gh-row span { border-right: 1px solid #e2e2e2; height: 25px; line-height: 25px; }
.gr .d { text-align: right; padding-right: 10px; letter-spacing: -.3px; }
.gr .d2 { padding-right: 16px; }
.gr .sz { text-align: right; padding-right: 4px; }
.dfoot { flex: 1; background: #f0f0f0; padding: 9px 17px 0; position: relative; }
.frow { display: flex; justify-content: flex-end; gap: 12px; }
.frow svg { color: #555; }
.fname { width: 420px; height: 24px; border: 1px solid #707070; background: #fff; display: flex; align-items: center; justify-content: flex-end; padding-right: 3px; }
.ftype { width: 188px; height: 23px; border: 1px solid #adadad; background: #e1e1e1; display: flex; align-items: center; justify-content: space-between; padding: 0 3px; }
.f2 { margin-top: 6px; gap: 14px; padding-right: 1px; }
.frow button { width: 86px; height: 24px; border: 1px solid #adadad; background: #e1e1e1; font: inherit; padding-bottom: 2px; }
.grip { position: absolute; right: 2px; bottom: 2px; }

/* Mirrored phone */
.phone { position: absolute; left: 890px; top: 4px; width: 439px; height: 892px; border: 1px solid #1883d7; background: #fcfcfe; box-shadow: 0 2px 18px rgba(0,0,0,.42); font-family: Roboto, sans-serif; display: flex; flex-direction: column; }
.phone > div { flex: none; }
.ptitle { height: 30px; background: #fff; display: flex; justify-content: flex-end; padding: 8px 15px 0 0; }
.pbar { height: 36px; background: #4896e6; display: flex; align-items: center; padding-left: 24px; gap: 6px; color: #fff; font: 14.500px "Liberation Sans", sans-serif; }
.pbar > span { margin-right: 143px; }
.bg { display: flex; height: 22px; background: #fff; border: 1px solid #ccc; border-radius: 2px; }
.bg i { display: grid; place-items: center; }
.bg i + i { border-left: 1px solid #ccc; }
.w18 { width: 17px; } .w21 { width: 21px; } .w22 { width: 21px; } .w23 { width: 23px; } .w24 { width: 24px; }
.pstat { height: 29px; background: #225985; display: flex; align-items: center; padding-left: 15px; color: #fff; }
.volte { margin-left: 217px; width: 32px; height: 17px; background: #fff; border-radius: 2px; color: #225985; font-size: 10px; font-weight: 900; line-height: 17px; text-align: center; }
.volte small { font-size: 9px; font-weight: 400; }
.sg { margin-left: 5px; } .sm { margin-left: 5px; }
.pct { margin-left: 8px; font-size: 17.500px; font-weight: 500; }
.bt { margin-left: 3px; }
.clk { margin-left: 6px; font-size: 20px; font-weight: 500; }
.acts { height: 268px; background: #f4f4f6; border-bottom: 2px solid #e9e9eb; padding-top: 10px; }
.acts div { height: 87px; display: flex; align-items: center; padding: 1px 0 0 19px; gap: 9px; font-size: 23.500px; color: #2b2b2b; }
.acts span { margin-top: 1px; }
.num { height: 74px; display: flex; align-items: center; padding: 0 19px 4px 31px; justify-content: space-between; }
.num span { font-size: 44px; color: #333; margin: 4px 0 0 14px; }
.keys { display: grid; grid-template-columns: 126px 126px 126px; grid-auto-rows: 77.700px; padding-left: 29px; height: 311px; }
.keys div { display: flex; flex-direction: column; align-items: center; }
.keys b { font-size: 50px; font-weight: 300; color: #0f87cd; line-height: 50px; height: 50px; margin-top: 8px; }
.keys .one { padding-left: 3px; }
.keys i { font-size: 16px; line-height: 18px; color: #7b7b7d; margin-top: -1px; }
.keys .plus { margin-top: -2px; }
.keys b + svg { margin-top: 3px; }
.keys .ast { margin-top: 27px; }
.keys em { font-size: 31px; font-weight: 300; line-height: 36px; margin-top: 20px; color: #8d8d8f; }
.call { height: 94px; display: grid; place-items: start center; padding: 5px 1px 0 0; }
.call span { width: 68px; height: 68px; margin-top: 1px; border-radius: 50%; background: #3fac72; display: grid; place-items: center; box-shadow: 0 5px 10px rgba(0,0,0,.25); }
.pnav { flex: 1 !important; background: #458bcb; border-right: 1px solid #000; }

/* Taskbar */
.task { position: absolute; left: 0; top: 860px; width: 1600px; height: 40px; background: linear-gradient(90deg, #030405 620px, #191a1b 630px, #222425 740px, #17191a 890px, #020203 1100px); display: flex; }
.start { width: 48px; display: grid; place-items: center; }
.ask { width: 344px; background: #333; display: flex; align-items: center; padding: 0 14px 0 9px; color: #9c9c9c; font-size: 15px; }
.ask span { margin-left: 9px; }
.mic { margin-left: auto; }
.apps { display: flex; padding-left: 1px; }
.apps > div { width: 49px; display: grid; place-items: center; position: relative; }
.apps > div:first-child { width: 48px; }
.ul::after { content: ""; position: absolute; left: 5px; right: 4px; bottom: 0; height: 2px; background: #76b9ed; }
.apps .full { background: #4b4d4e; width: 48px; margin-left: 1px; }
.full::after { left: 0; right: 0; }
.under { margin-left: auto; width: 439px; height: 36px; background: #0b161e; border: solid #0e2d45; border-width: 0 1px 1px; }
.tray { width: 271px; display: flex; align-items: center; padding-left: 74px; border-right: 5px solid #0b0b0b; box-shadow: inset -1px 0 #555; }
.tray svg + svg { margin-left: 8px; }
.tray .up2 { margin-left: -1px; }
.tray .wf { margin-left: 10px; }
.time { margin: -2px 11px 0 15px; color: #fff; line-height: 16px; display: flex; flex-direction: column; align-items: center; }
```
FILE: fit.js
```js
// Tracks each label so that it spans the width given in data-w.
document.querySelectorAll('[data-w]').forEach(function (el) {
  var natural = el.getBoundingClientRect().width;
  var n = el.textContent.length;
  el.style.letterSpacing = ((Number(el.dataset.w) - natural) / n).toFixed(3) + 'px';
});
```
